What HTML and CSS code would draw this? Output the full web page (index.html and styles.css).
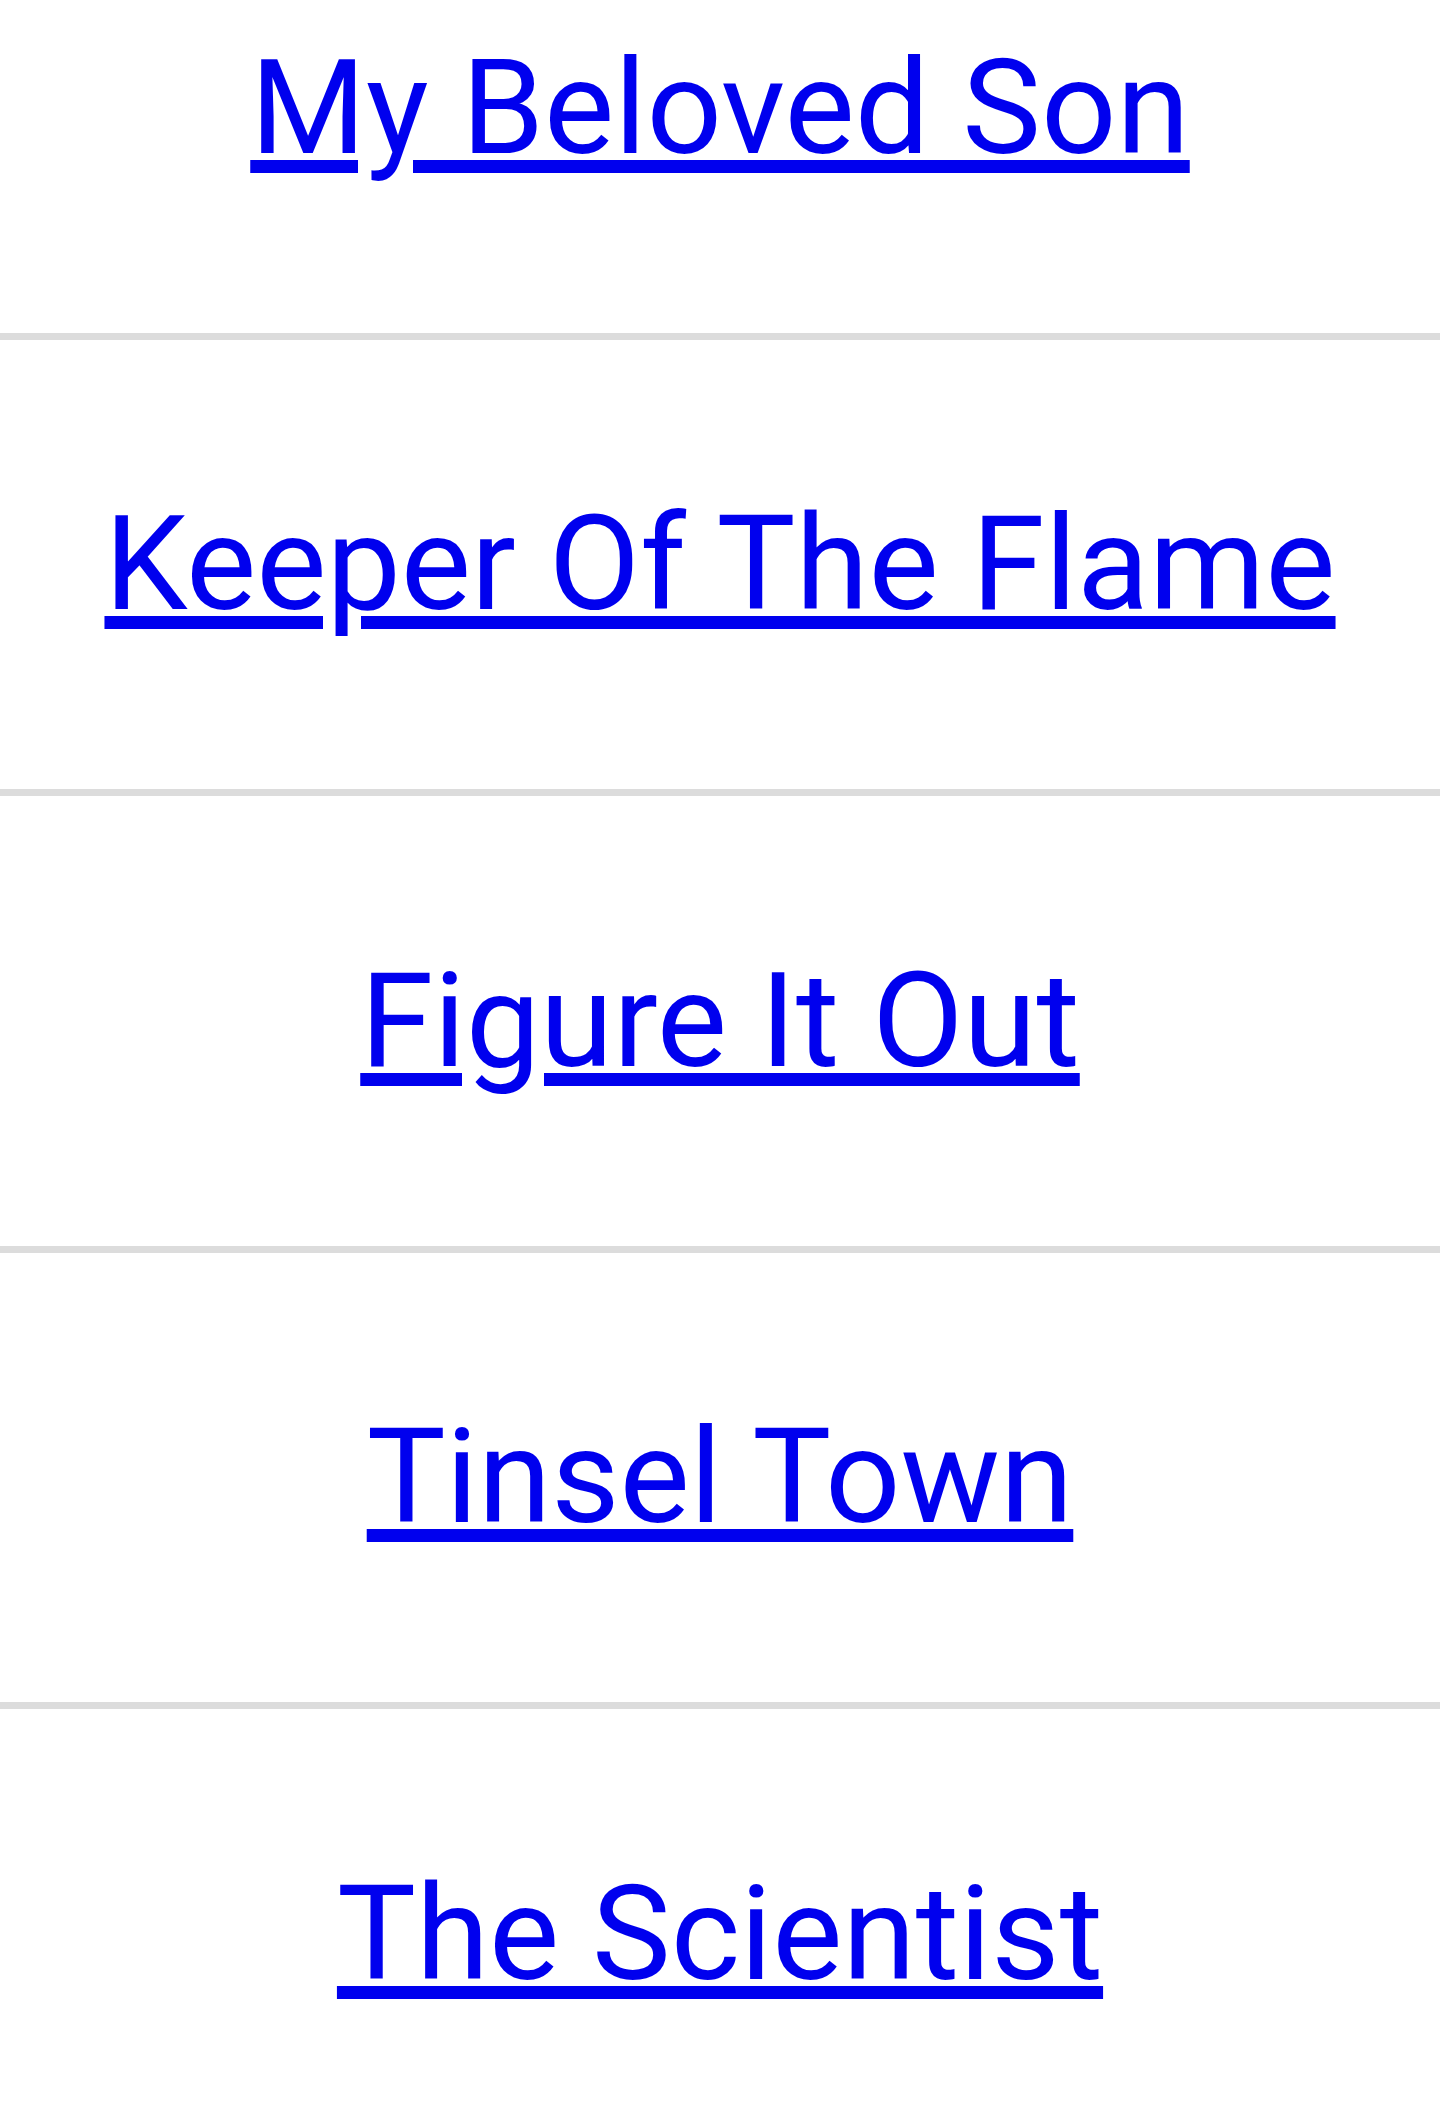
FILE: index.html
```html
<!DOCTYPE html>
<html lang="en">
<head>
<meta charset="utf-8">
<title>Songs</title>
<link rel="stylesheet" href="styles.css">
</head>
<body>
<ul class="songs">
  <li class="song"><a href="#">My Beloved Son</a></li>
  <li class="song"><a href="#">Keeper Of The Flame</a></li>
  <li class="song"><a href="#">Figure It Out</a></li>
  <li class="song"><a href="#">Tinsel Town</a></li>
  <li class="song"><a href="#">The Scientist</a></li>
</ul>
</body>
</html>
```

FILE: styles.css
```css
html, body {
  margin: 0;
  padding: 0;
  background: #ffffff;
}
body {
  font-family: Roboto, "Liberation Sans", sans-serif;
  overflow: hidden;
}
.songs {
  list-style: none;
  margin: -117px 0 0 0;
  padding: 0;
}
.song {
  height: 449.6px;
  display: flex;
  align-items: center;
  justify-content: center;
  border-bottom: 7px solid #dcdcdc;
  font-size: 132.5px;
  line-height: 1;
}
.song a {
  color: #0000ee;
  text-decoration: underline;
}
```
